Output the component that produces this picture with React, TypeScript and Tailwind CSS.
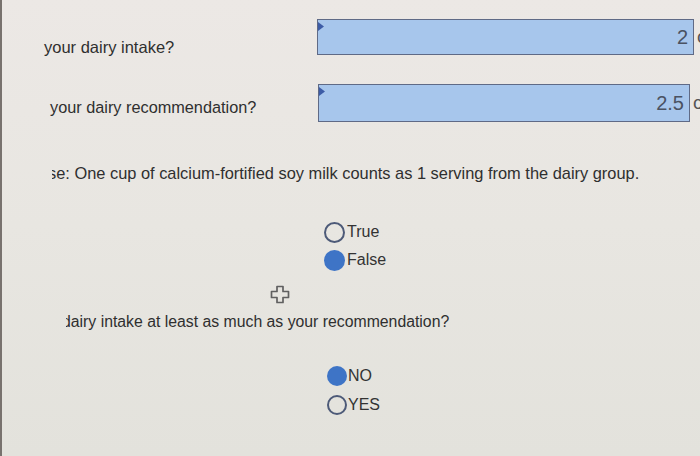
import React from "react";

function Radio({ checked, label, size = 21 }: { checked: boolean; label: string; size?: number }) {
  return (
    <div className="flex items-center h-[28px]">
      <div
        className={
          checked
            ? "rounded-full bg-[#3e74c6] shrink-0"
            : "rounded-full border-[2.5px] border-[#4d5a78] shrink-0"
        }
        style={{ width: size, height: size }}
      />
      <span className="ml-[2px] text-[16px] leading-[18px] text-[#333]">{label}</span>
    </div>
  );
}

function Box({ value, w, h, tail }: { value: string; w: string; h: string; tail: string }) {
  return (
    <div className="flex items-center">
      <div className={`relative ${w} ${h} bg-[#a7c6ec] border-[1.5px] border-[#5f6a86] flex items-center justify-end pr-[5px]`}>
        <svg className="absolute left-0 top-[2px]" width="6" height="9" viewBox="0 0 6 9">
          <polygon points="0,0 6,4.5 0,9" fill="#3d5ca6" />
        </svg>
        <span className="text-[20px] leading-[22px] text-[#4a5262]">{value}</span>
      </div>
      <span className="ml-[3px] text-[19px] leading-[20px] text-[#555]">{tail}</span>
    </div>
  );
}

export default function App() {
  return (
    <div
      className="w-[700px] h-[456px] overflow-hidden flex flex-col border-l-2 border-[#78726e] bg-gradient-to-b from-[#ece8e5] via-[#e8e6e1] to-[#e3e2dc] text-[#2f2f2f]"
      style={{ fontFamily: "'Liberation Sans', Arial, sans-serif" }}
    >
      <div className="mt-[19px] flex h-[36px] shrink-0">
        <div className="w-[315px] pl-[42px] pt-[19px] text-[16.5px] leading-[18px] shrink-0">your dairy intake?</div>
        <Box value="2" w="w-[377px]" h="h-[36px]" tail="c" />
      </div>
      <div className="mt-[29px] flex h-[38px] shrink-0">
        <div className="w-[316px] pl-[48px] pt-[14px] text-[16.3px] leading-[18px] shrink-0">your dairy recommendation?</div>
        <Box value="2.5" w="w-[372px]" h="h-[38px]" tail="c" />
      </div>
      <div className="mt-[42px] pl-[50px] shrink-0">
        <div className="overflow-hidden text-[16.4px] leading-[18px] whitespace-nowrap">
          <span className="inline-block ml-[-4px]">se: One cup of calcium-fortified soy milk counts as 1 serving from the dairy group.</span>
        </div>
      </div>
      <div className="mt-[36px] pl-[322px] flex flex-col shrink-0">
        <Radio checked={false} label="True" />
        <Radio checked={true} label="False" />
      </div>
      <div className="mt-[11px] pl-[268px] h-[19px] shrink-0">
        <svg width="20" height="19" viewBox="0 0 20 19">
          <path
            d="M7 1.5 H13 V6.5 H18.5 V12.5 H13 V17.5 H7 V12.5 H1.5 V6.5 H7 Z"
            fill="none"
            stroke="#606060"
            strokeWidth="1.7"
            strokeLinejoin="round"
          />
        </svg>
      </div>
      <div className="mt-[9px] pl-[64px] shrink-0">
        <div className="overflow-hidden text-[15.8px] leading-[18px] whitespace-nowrap">
          <span className="inline-block ml-[-4px]">dairy intake at least as much as your recommendation?</span>
        </div>
      </div>
      <div className="mt-[30px] pl-[325px] flex flex-col shrink-0">
        <div className="h-[29px] flex items-center">
          <div className="w-[20px] h-[20px] rounded-full bg-[#3e74c6]" />
          <span className="ml-[1px] text-[16px] leading-[18px] text-[#333]">NO</span>
        </div>
        <div className="h-[29px] flex items-center">
          <div className="w-[20px] h-[20px] rounded-full border-[2.5px] border-[#4d5a78]" />
          <span className="ml-[1px] text-[16px] leading-[18px] text-[#333]">YES</span>
        </div>
      </div>
    </div>
  );
}
